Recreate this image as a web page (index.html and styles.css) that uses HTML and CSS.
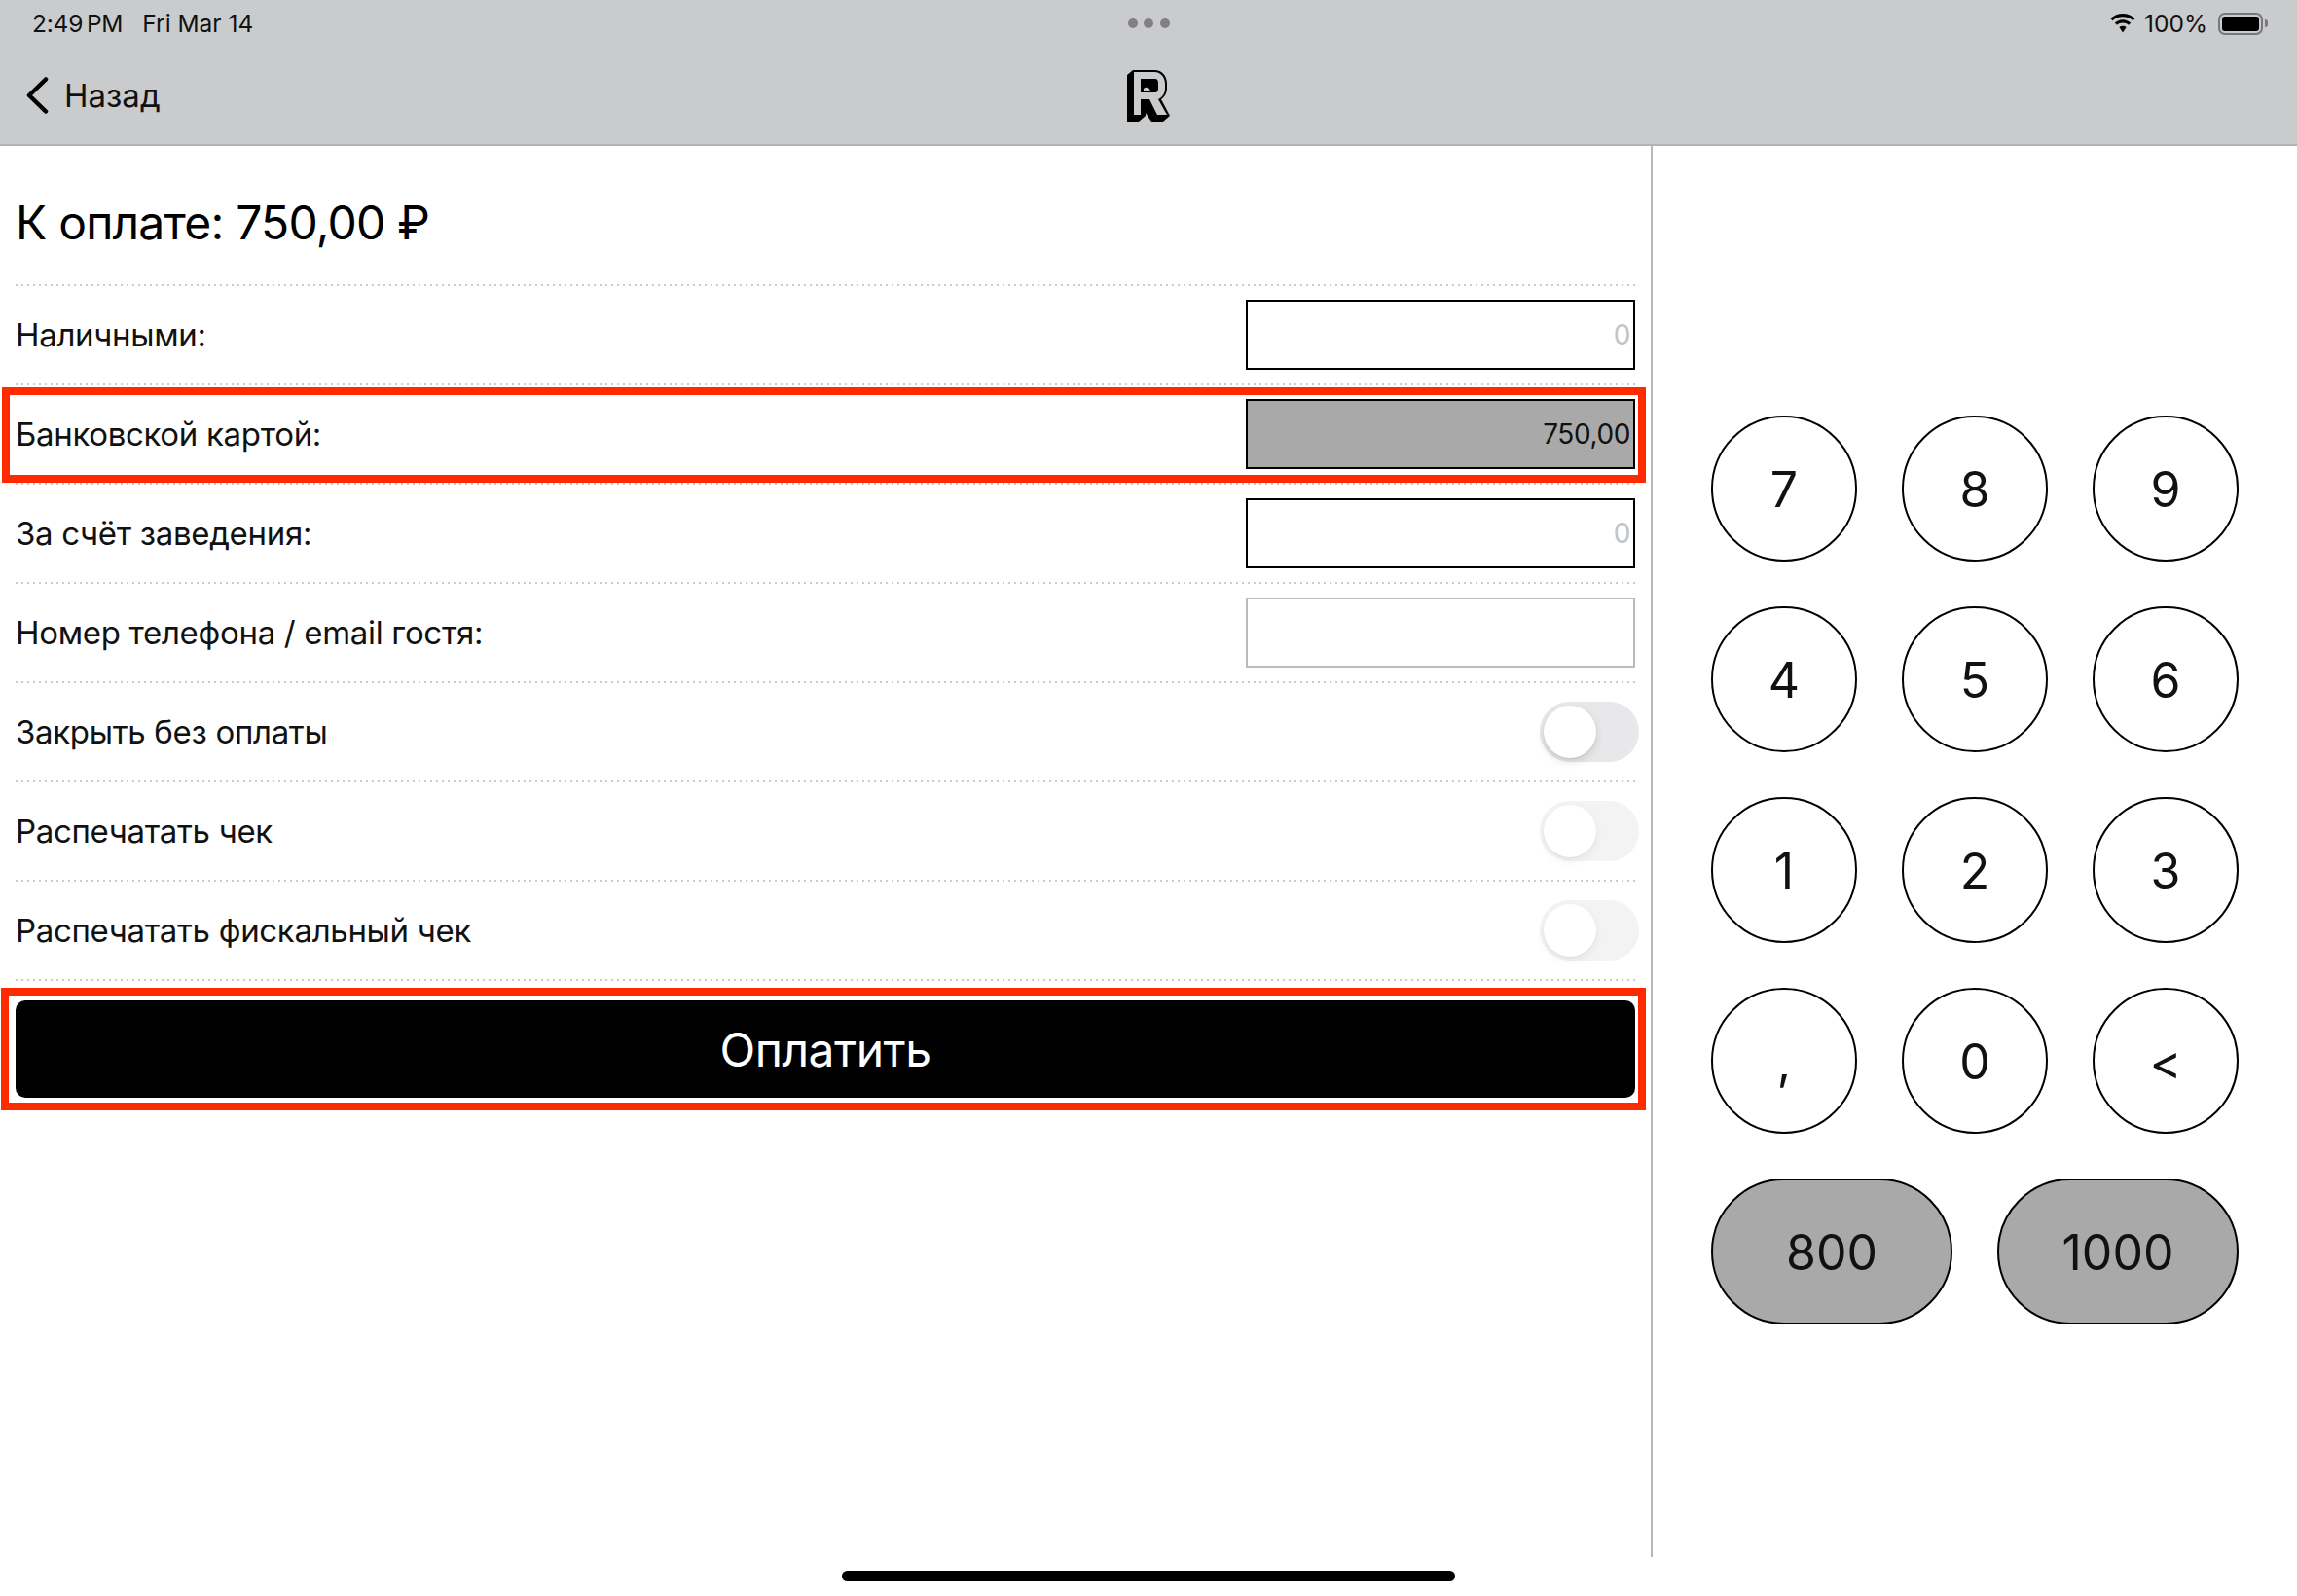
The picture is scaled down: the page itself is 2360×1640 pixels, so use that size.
FILE: index.html
```html
<!DOCTYPE html>
<html lang="ru">
<head>
    <meta charset="UTF-8">
    <meta name="viewport" content="width=device-width, initial-scale=1.0">
    <title>Оплата</title>
    <link rel="stylesheet" href="styles.css">
</head>
<body>
    <header class="top-bar">
        <div class="status-bar">
            <div class="status-left">
                <span class="status-time">2:49 PM</span>
                <span>Fri Mar 14</span>
            </div>
            <div class="status-dots"><i></i><i></i><i></i></div>
            <div class="status-right">
                <svg class="wifi-icon" viewBox="0 0 28 20" width="28" height="20">
                    <path d="M14 3.2c4 0 7.7 1.500 10.500 4.100l2.100-2.200C23.300 1.900 18.900 0 14 0S4.700 1.900 1.400 5.100l2.100 2.200C6.300 4.700 10 3.200 14 3.200z"/>
                    <path d="M14 9.500c2.300 0 4.400.9 6 2.300l2.200-2.200C20 7.600 17.100 6.300 14 6.300s-6 1.300-8.200 3.300L8 11.800c1.600-1.400 3.700-2.300 6-2.300z"/>
                    <path d="M14 12.700c-1.400 0-2.600.5-3.600 1.300l3.600 5.600 3.600-5.600c-1-.8-2.200-1.300-3.600-1.300z"/>
                </svg>
                <span>100%</span>
                <div class="battery"><div class="battery-fill"></div></div>
                <div class="battery-nub"></div>
            </div>
        </div>
        <div class="nav-bar">
            <div class="back-link">
                <svg class="back-icon" viewBox="0 0 24 38" width="24" height="38">
                    <path d="M21 2.500 4 19l17 16.500" fill="none" stroke="#000" stroke-width="4.500" stroke-linecap="round" stroke-linejoin="round"/>
                </svg>
                <span>Назад</span>
            </div>
            <svg class="logo" viewBox="0 0 44 53" width="44" height="53">
                <path d="M6 0H28C36 0 41 6 41 14V19C41 24 38 28 35 30L44 47L37 53H25L19 44V47L12 53H0V5Z" fill="#000"/>
                <path fill-rule="evenodd" fill="#cacbcd" d="M7 2H28C35 2 39 8 39 14V19C39 24 36 28 32 30L41 46H31L23 30H14V46H7ZM14 9V23H29C31 23 32 21 32 19V13C32 11 31 9 29 9Z"/>
                <path d="M17 19C19 17 22 17 24 21H17Z" fill="#cacbcd"/>
            </svg>
            <div></div>
        </div>
    </header>

    <main class="content">
        <section class="payment">
            <h1 class="total">К оплате: 750,00 ₽</h1>

            <div class="row">
                <label>Наличными:</label>
                <input class="amount" type="text" placeholder="0" readonly>
            </div>
            <div class="row row-marked">
                <label>Банковской картой:</label>
                <input class="amount amount-active" type="text" value="750,00" readonly>
            </div>
            <div class="row">
                <label>За счёт заведения:</label>
                <input class="amount" type="text" placeholder="0" readonly>
            </div>
            <div class="row">
                <label>Номер телефона / email гостя:</label>
                <input class="amount amount-muted" type="text" readonly>
            </div>
            <div class="row">
                <label>Закрыть без оплаты</label>
                <div class="switch"><div class="knob"></div></div>
            </div>
            <div class="row">
                <label>Распечатать чек</label>
                <div class="switch switch-off"><div class="knob"></div></div>
            </div>
            <div class="row">
                <label>Распечатать фискальный чек</label>
                <div class="switch switch-off"><div class="knob"></div></div>
            </div>

            <div class="pay-wrap row-marked">
                <button class="pay-btn">Оплатить</button>
            </div>
        </section>

        <section class="keypad">
            <div class="key-row">
                <button class="key">7</button>
                <button class="key">8</button>
                <button class="key">9</button>
            </div>
            <div class="key-row">
                <button class="key">4</button>
                <button class="key">5</button>
                <button class="key">6</button>
            </div>
            <div class="key-row">
                <button class="key">1</button>
                <button class="key">2</button>
                <button class="key">3</button>
            </div>
            <div class="key-row">
                <button class="key">,</button>
                <button class="key">0</button>
                <button class="key">&lt;</button>
            </div>
            <div class="key-row">
                <button class="key key-wide">800</button>
                <button class="key key-wide">1000</button>
            </div>
        </section>
    </main>

    <div class="home-indicator"></div>
</body>
</html>
```

FILE: styles.css
```css
body {
    margin: 0;
    width: 2360px;
    height: 1640px;
    overflow: hidden;
    position: relative;
    background-color: #fff;
    color: #000;
    font-family: Inter, "Noto Sans", sans-serif;
}

/* Top bar */
.top-bar {
    height: 148px;
    background-color: #cacbcd;
    border-bottom: 2px solid #b4b4b6;
}

.status-bar {
    height: 48px;
    display: grid;
    grid-template-columns: 1fr auto 1fr;
    align-items: center;
    font-size: 24.500px;
    color: #111;
}

.status-left {
    display: flex;
    gap: 20px;
    padding-left: 33px;
}

.status-time {
    word-spacing: -3px;
    letter-spacing: -0.200px;
}

.status-dots {
    display: flex;
    gap: 6.500px;
}

.status-dots i {
    width: 10px;
    height: 10px;
    border-radius: 50%;
    background-color: #808082;
}

.status-right {
    display: flex;
    align-items: center;
    justify-content: flex-end;
    padding-right: 30px;
}

.wifi-icon {
    margin-right: 8px;
}

.battery {
    width: 46px;
    height: 23px;
    margin-left: 11px;
    box-sizing: border-box;
    border: 2px solid #77787a;
    border-radius: 7px;
    padding: 2px;
}

.battery-fill {
    height: 100%;
    background-color: #000;
    border-radius: 3px;
}

.battery-nub {
    width: 3px;
    height: 8px;
    margin-left: 2px;
    background-color: #77787a;
    border-radius: 0 3px 3px 0;
}

.nav-bar {
    height: 100px;
    display: grid;
    grid-template-columns: 1fr auto 1fr;
    align-items: center;
}

.back-link {
    display: flex;
    align-items: center;
    gap: 16px;
    padding-left: 26px;
    font-size: 33px;
    color: #111;
}

/* Main area */
.content {
    display: flex;
    height: 1450px;
}

.payment {
    width: 1664px;
    padding: 0 16px;
    border-right: 2px solid #b8b8b8;
}

.total {
    margin: 0;
    height: 144px;
    box-sizing: border-box;
    padding-top: 12px;
    display: flex;
    align-items: center;
    font-size: 48px;
    font-weight: 400;
    letter-spacing: -0.800px;
    background-image: repeating-linear-gradient(to right, #ccc 0, #ccc 2px, transparent 2px, transparent 6px);
    background-size: 100% 2px;
    background-position: bottom;
    background-repeat: no-repeat;
}

.row {
    height: 102px;
    box-sizing: border-box;
    padding-bottom: 2px;
    display: flex;
    align-items: center;
    justify-content: space-between;
    background-image: repeating-linear-gradient(to right, #ccc 0, #ccc 2px, transparent 2px, transparent 6px);
    background-size: 100% 2px;
    background-position: bottom;
    background-repeat: no-repeat;
}

.row label {
    font-size: 33px;
    letter-spacing: -0.320px;
    color: #111;
}

.amount {
    width: 400px;
    height: 72px;
    box-sizing: border-box;
    border: 2px solid #000;
    border-radius: 0;
    padding: 0 3px 0 0;
    background-color: #fff;
    font-family: inherit;
    font-size: 28px;
    letter-spacing: -0.400px;
    color: #111;
    text-align: right;
    outline: none;
}

.amount::placeholder {
    color: #c4c4c4;
}

.amount-active {
    background-color: #a9a9a9;
}

.amount-muted {
    border-color: #bbb;
}

/* Toggles */
.switch {
    width: 102px;
    height: 62px;
    margin-right: -4px;
    box-sizing: border-box;
    padding: 4px;
    border-radius: 31px;
    background-color: #e8e8ea;
}

.knob {
    width: 54px;
    height: 54px;
    border-radius: 50%;
    background-color: #fff;
    box-shadow: 0 4px 10px rgba(0, 0, 0, 0.12), 0 1px 2px rgba(0, 0, 0, 0.08);
}

.switch-off {
    background-color: #f3f3f4;
}

.switch-off .knob {
    box-shadow: 0 4px 10px rgba(0, 0, 0, 0.06), 0 1px 2px rgba(0, 0, 0, 0.04);
}

/* Pay button */
.pay-wrap {
    height: 113px;
    padding-top: 20px;
}

.pay-btn {
    display: block;
    width: 100%;
    height: 100px;
    border: none;
    border-radius: 10px;
    background-color: #000;
    color: #fff;
    font-family: inherit;
    font-size: 48px;
    letter-spacing: -0.500px;
}

/* Red marks over the rows */
.row-marked {
    position: relative;
}

.row-marked::after {
    content: "";
    position: absolute;
    left: -14px;
    right: -11px;
    top: 2px;
    bottom: 2px;
    border: 8px solid #ff2a00;
}

.pay-wrap::after {
    left: -15px;
    top: 7px;
    bottom: 0;
}

/* Keypad */
.keypad {
    flex: 1;
    display: flex;
    flex-direction: column;
    gap: 46px;
    padding: 277px 0 0 60px;
}

.key-row {
    display: flex;
    gap: 46px;
}

.key {
    width: 150px;
    height: 150px;
    padding: 2px 0 0;
    box-sizing: border-box;
    border: 2px solid #000;
    border-radius: 50%;
    background-color: #fff;
    color: #111;
    font-family: inherit;
    font-size: 50px;
}

.key-wide {
    width: 248px;
    border-radius: 75px;
    background-color: #a9a9a9;
}

.home-indicator {
    position: absolute;
    left: 865px;
    bottom: 15px;
    width: 630px;
    height: 11px;
    border-radius: 5.500px;
    background-color: #000;
}
```
